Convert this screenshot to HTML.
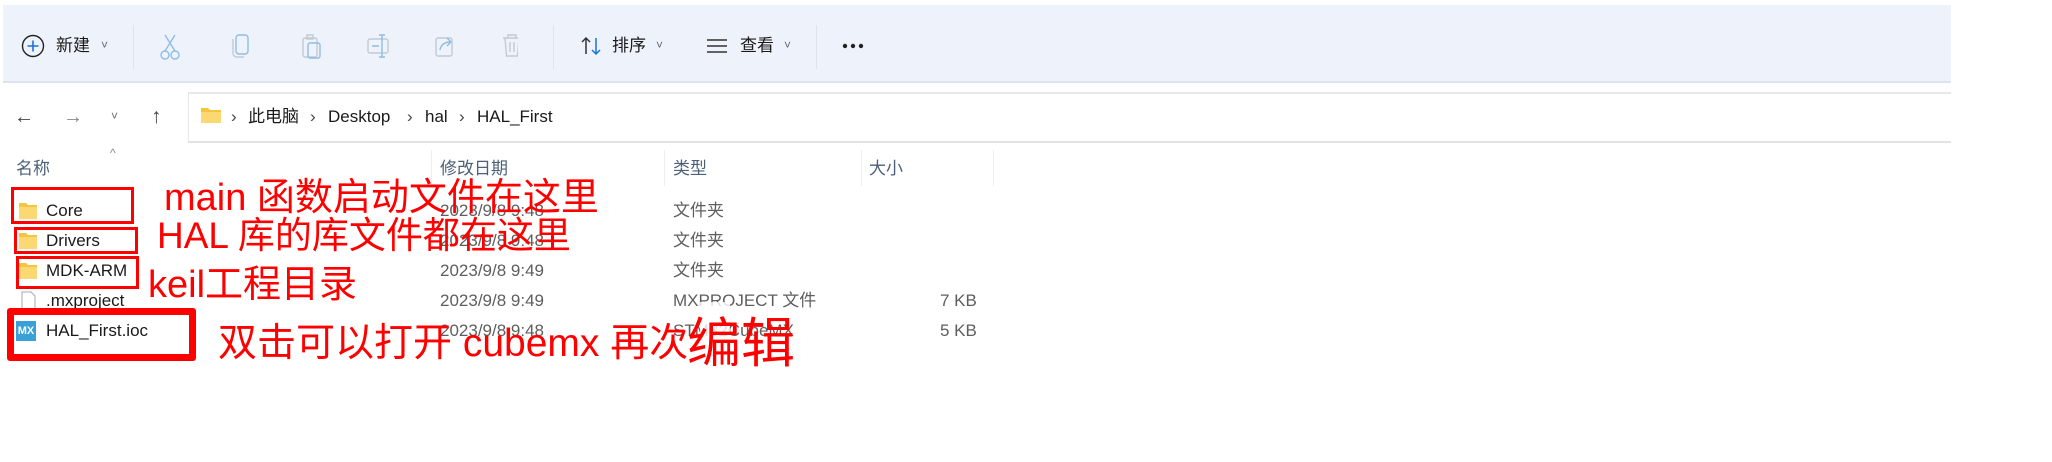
<!DOCTYPE html>
<html><head><meta charset="utf-8"><style>
*{margin:0;padding:0;box-sizing:border-box}
body{width:2052px;height:462px;background:#fff;position:relative;overflow:hidden;font-family:"Liberation Sans","Noto Sans CJK SC",sans-serif;color:#1a1a1a}
.a{position:absolute;white-space:nowrap}
.t{font-size:17px;line-height:22px}
.g{color:#5e5e5e}
.h{color:#4c607a;font-size:17px;line-height:22px}
.red{color:#f00;font-family:"Liberation Sans","Noto Sans CJK SC",sans-serif}
.box{position:absolute;border:3px solid #f00}
.sep{position:absolute;width:1px;background:#dfe3ea}
</style></head><body>
<div class="a" style="left:3px;top:5px;width:1948px;height:78px;background:#eef3fb;border-bottom:2px solid #dde3ea"></div>
<div class="sep" style="left:133px;top:25px;height:44px"></div>
<div class="sep" style="left:553px;top:25px;height:44px"></div>
<div class="sep" style="left:816px;top:25px;height:44px"></div>
<svg class="a" style="left:20px;top:33px" width="26" height="26" viewBox="0 0 26 26"><circle cx="13" cy="13" r="10.5" fill="none" stroke="#222" stroke-width="1.4"/><path d="M13 7.5v11M7.5 13h11" stroke="#1a73d9" stroke-width="1.6"/></svg>
<div class="a t" style="left:56px;top:35px">新建</div>
<div class="a" style="left:101px;top:35px;font-size:12px;line-height:20px;color:#666">˅</div>
<svg class="a" style="left:158px;top:32px" width="360" height="30" viewBox="0 0 360 30" fill="none" stroke="#8fbce6" stroke-width="1.4">
<path d="M7 3l10 16M17 3L7 19"/><circle cx="7" cy="23" r="4"/><circle cx="17" cy="23" r="4"/>
<rect x="78" y="3" width="12" height="19" rx="3"/><path d="M75 7v14a4 4 0 0 0 4 4h7" stroke="#c3cad3"/>
<rect x="145" y="6" width="14" height="19" rx="2" stroke="#c3cad3"/><rect x="150" y="11" width="12" height="15" rx="2"/><rect x="149" y="3" width="6" height="4" stroke="#c3cad3"/>
<rect x="210" y="7" width="20" height="14" rx="2" stroke="#c3cad3"/><path d="M214 14h7M224 3v22M221 3h6M221 25h6"/>
<rect x="278" y="6" width="16" height="18" rx="2" stroke="#c3cad3"/><path d="M282 18c1-6 5-8 11-8M289 6l4 4-4 4"/>
<path d="M345 6h18M350 6V3h8v3M347 6l1.5 18h11L361 6M352 10v10M356 10v10" stroke="#c3cad3"/>
</svg>
<svg class="a" style="left:580px;top:34px" width="24" height="24" viewBox="0 0 24 24" fill="none" stroke-width="1.5"><path d="M6 20V4M2 8l4-4 4 4" stroke="#333"/><path d="M16 4v16M12 16l4 4 4-4" stroke="#1a73d9"/></svg>
<div class="a t" style="left:612px;top:35px">排序</div>
<div class="a" style="left:656px;top:35px;font-size:12px;line-height:20px;color:#666">˅</div>
<svg class="a" style="left:706px;top:36px" width="22" height="20"><path d="M1 4h20M1 10h20M1 16h20" stroke="#333" stroke-width="1.6"/></svg>
<div class="a t" style="left:740px;top:35px">查看</div>
<div class="a" style="left:784px;top:35px;font-size:12px;line-height:20px;color:#666">˅</div>
<svg class="a" style="left:842px;top:42px" width="22" height="8"><circle cx="3" cy="4" r="2.2" fill="#222"/><circle cx="11" cy="4" r="2.2" fill="#222"/><circle cx="19" cy="4" r="2.2" fill="#222"/></svg>

<div class="a" style="left:188px;top:92px;width:1763px;height:51px;border-top:2px solid #e8e8e8;border-left:1px solid #e8e8e8;border-bottom:2px solid #e2e2e2"></div>
<div class="a" style="left:14px;top:104px;font-size:20px;line-height:26px;color:#444">←</div>
<div class="a" style="left:63px;top:104px;font-size:20px;line-height:26px;color:#888">→</div>
<div class="a" style="left:111px;top:106px;font-size:12px;line-height:20px;color:#666">˅</div>
<div class="a" style="left:151px;top:104px;font-size:21px;line-height:26px;color:#444">↑</div>
<svg class="a" style="left:200px;top:106px" width="22" height="18"><path d="M1 2h7l2 2h11v13H1z" fill="#f5c542"/><path d="M1 6h20v11H1z" fill="#fcd872"/></svg>
<div class="a t" style="left:231px;top:106px;color:#444">›</div>
<div class="a t" style="left:248px;top:106px">此电脑</div>
<div class="a t" style="left:310px;top:106px;color:#444">›</div>
<div class="a t" style="left:328px;top:106px">Desktop</div>
<div class="a t" style="left:407px;top:106px;color:#444">›</div>
<div class="a t" style="left:425px;top:106px">hal</div>
<div class="a t" style="left:459px;top:106px;color:#444">›</div>
<div class="a t" style="left:477px;top:106px">HAL_First</div>

<div class="a" style="left:110px;top:146px;font-size:12px;line-height:14px;color:#888">^</div>
<div class="sep" style="left:431px;top:150px;height:36px;background:#eee"></div>
<div class="sep" style="left:664px;top:150px;height:36px;background:#eee"></div>
<div class="sep" style="left:861px;top:150px;height:36px;background:#eee"></div>
<div class="sep" style="left:993px;top:150px;height:36px;background:#eee"></div>
<div class="a h" style="left:16px;top:158px">名称</div>
<div class="a h" style="left:440px;top:158px">修改日期</div>
<div class="a h" style="left:673px;top:158px">类型</div>
<div class="a h" style="left:869px;top:158px">大小</div>

<svg class="a" style="left:18px;top:202px" width="20" height="110"><g><path d="M1 1h7l2 2h9v14H1z" fill="#f5c542"/><path d="M1 5h18v12H1z" fill="#fcd872"/></g><g transform="translate(0,30)"><path d="M1 1h7l2 2h9v14H1z" fill="#f5c542"/><path d="M1 5h18v12H1z" fill="#fcd872"/></g><g transform="translate(0,60)"><path d="M1 1h7l2 2h9v14H1z" fill="#f5c542"/><path d="M1 5h18v12H1z" fill="#fcd872"/></g><path d="M4 90h9l4 4v16H4z" fill="#fff" stroke="#aaa"/></svg>
<div class="a" style="left:16px;top:321px;width:20px;height:20px;background:#3aa0d8;color:#fff;font-size:11px;font-weight:bold;text-align:center;line-height:20px">MX</div>
<div class="a t" style="left:46px;top:200px">Core</div>
<div class="a t" style="left:46px;top:230px">Drivers</div>
<div class="a t" style="left:46px;top:260px">MDK-ARM</div>
<div class="a t" style="left:46px;top:290px">.mxproject</div>
<div class="a t" style="left:46px;top:320px">HAL_First.ioc</div>
<div class="a t g" style="left:440px;top:200px">2023/9/8 9:48</div>
<div class="a t g" style="left:440px;top:230px">2023/9/8 9:48</div>
<div class="a t g" style="left:440px;top:260px">2023/9/8 9:49</div>
<div class="a t g" style="left:440px;top:290px">2023/9/8 9:49</div>
<div class="a t g" style="left:440px;top:320px">2023/9/8 9:48</div>
<div class="a t g" style="left:673px;top:200px">文件夹</div>
<div class="a t g" style="left:673px;top:230px">文件夹</div>
<div class="a t g" style="left:673px;top:260px">文件夹</div>
<div class="a t g" style="left:673px;top:290px">MXPROJECT 文件</div>
<div class="a t g" style="left:673px;top:320px">STM32CubeMX</div>
<div class="a t g" style="left:940px;top:290px">7 KB</div>
<div class="a t g" style="left:940px;top:320px">5 KB</div>
<div class="a" style="left:700px;top:302px;width:30px;height:70px;background:rgba(255,255,255,0.8)"></div>

<div class="box" style="left:11px;top:187px;width:123px;height:37px"></div>
<div class="box" style="left:14px;top:227px;width:124px;height:27px"></div>
<div class="box" style="left:16px;top:256px;width:123px;height:33px"></div>
<div class="box" style="left:7px;top:308px;width:189px;height:53px;border-width:7px;border-radius:3px"></div>
<div class="a red" style="left:164px;top:174px;font-size:38px;line-height:48px">main 函数启动文件在这里</div>
<div class="a red" style="left:157px;top:213px;font-size:37px;line-height:46px">HAL 库的库文件都在这里</div>
<div class="a red" style="left:148px;top:262px;font-size:38px;line-height:46px">keil工程目录</div>
<div class="a red" style="left:218px;top:320px;font-size:39px;line-height:48px">双击可以打开 cubemx 再次</div>
<div class="a red" style="left:687px;top:312px;font-size:54px;line-height:64px">编辑</div>
</body></html>
